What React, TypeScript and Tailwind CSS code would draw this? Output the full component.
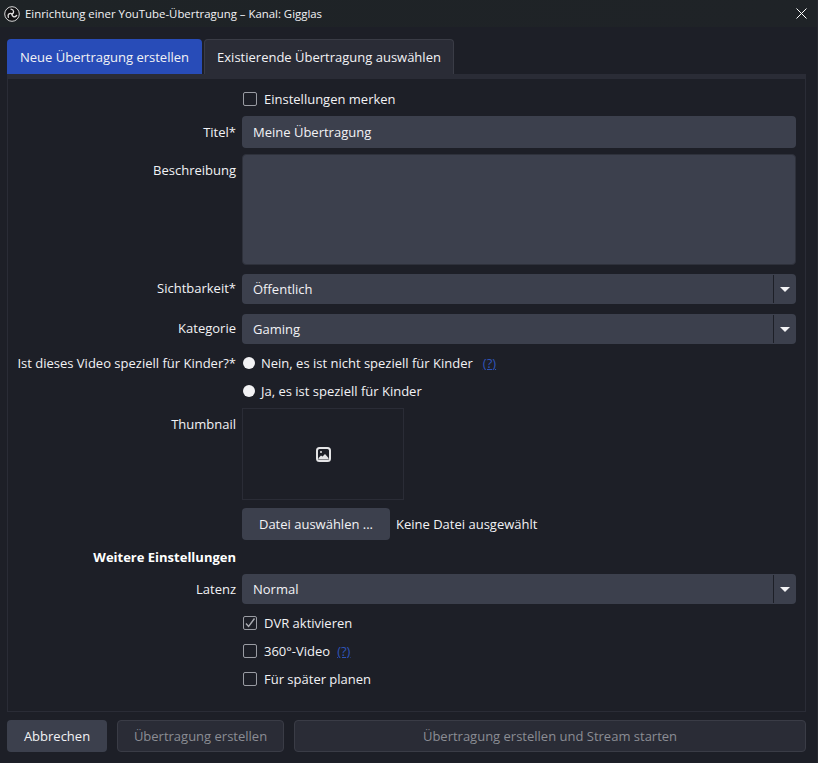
const font = "font-['Open_Sans','Noto_Sans',sans-serif]";

function Row({ label, className, bold, children }: { label?: string; className: string; bold?: boolean; children?: React.ReactNode }) {
  return (
    <div className={"flex " + className}>
      <div className={"w-[228px] shrink-0 text-right whitespace-nowrap " + (bold ? "font-bold text-white" : "")}>{label}</div>
      <div className="ml-[6px] w-[554px]">{children}</div>
    </div>
  );
}

function Box({ checked }: { checked?: boolean }) {
  return (
    <span className="w-[14px] h-[14px] rounded-[2px] border border-[#9a9ca3] flex items-center justify-center shrink-0">
      {checked && (
        <svg width="12" height="12" viewBox="0 0 12 12" fill="none">
          <path d="M2 6.5L4.6 9.5L10.5 1.5" stroke="#a8aab0" strokeWidth="1.4" />
        </svg>
      )}
    </span>
  );
}

function CheckRow({ text, checked, help, className }: { text: string; checked?: boolean; help?: boolean; className: string }) {
  return (
    <Row className={"h-[20px] items-center " + className}>
      <div className="flex items-center h-[20px] pl-[1px]">
        <Box checked={checked} />
        <span className="ml-[7px]">{text}</span>
        {help && <span className="ml-[7px] text-[#2f54b8] underline text-[13px]">(?)</span>}
      </div>
    </Row>
  );
}

function Radio({ text, help }: { text: string; help?: boolean }) {
  return (
    <div className="flex items-center h-[20px] pl-[1px]">
      <span className="w-[12px] h-[12px] rounded-full bg-[#f2f2f4] shrink-0" />
      <span className="ml-[6px]">{text}</span>
      {help && <span className="ml-[10px] text-[#2f54b8] underline text-[13px]">(?)</span>}
    </div>
  );
}

function Select({ value }: { value: string }) {
  return (
    <div className="h-[30px] rounded-[4px] bg-[#3c404d] flex items-center">
      <span className="pl-[11px] flex-1">{value}</span>
      <span className="w-px h-[28px] bg-[#1d1f27]" />
      <span className="w-[22px] flex justify-center">
        <svg width="10" height="5" viewBox="0 0 10 5"><path d="M0 0h10L5 5z" fill="#f4f4f6" /></svg>
      </span>
    </div>
  );
}

export default function App() {
  return (
    <div className={"w-[818px] h-[763px] overflow-hidden bg-[#1d1f27] text-[#f2f2f5] text-[13px] leading-[20px] border-r border-[#26282f] " + font}>
      {/* Title bar */}
      <div className="h-[27px] bg-gradient-to-r from-[#1e2326] to-[#1f2327] flex items-center pl-[4px] pr-[10px] text-[11.4px]">
        <svg width="16" height="16" viewBox="0 0 16 16" className="shrink-0" fill="none">
          <circle cx="8" cy="8" r="7.3" fill="#121214" stroke="#d8d8d8" strokeWidth="1" />
          <g stroke="#e2e2e2" strokeWidth="1.3" strokeLinecap="round">
            <path d="M8 8C10.2 7 10.4 3.8 7 3.2" />
            <path d="M8 8C10.2 7 10.4 3.8 7 3.2" transform="rotate(120 8 8)" />
            <path d="M8 8C10.2 7 10.4 3.8 7 3.2" transform="rotate(240 8 8)" />
          </g>
        </svg>
        <span className="ml-[5px] flex-1">Einrichtung einer YouTube-Übertragung – Kanal: Gigglas</span>
        <svg width="11" height="11" viewBox="0 0 11 11" className="shrink-0" fill="none">
          <path d="M0.5 0.5L10.5 10.5M10.5 0.5L0.5 10.5" stroke="#ffffff" strokeWidth="1" />
        </svg>
      </div>

      {/* Tabs */}
      <div className="flex mt-[12px] pl-[7px] gap-[2px] h-[35px]">
        <div className="w-[195px] rounded-t-[4px] bg-[#284cb8] flex items-center justify-center">Neue Übertragung erstellen</div>
        <div className="w-[250px] rounded-t-[4px] bg-[#2a2c36] border border-b-0 border-[#3a3c46] flex items-center justify-center">Existierende Übertragung auswählen</div>
      </div>

      {/* Pane */}
      <div className="ml-[7px] w-[799px] h-[638px] border-t-[5px] border-t-[#2a2c36] border-x border-b border-x-[#2a2c36] border-b-[#2a2c36]">
        <CheckRow text="Einstellungen merken" className="mt-[10px]" />

        <Row label="Titel*" className="mt-[7px] leading-[32px]">
          <div className="h-[32px] rounded-[4px] bg-[#3c404d] pl-[11px]">Meine Übertragung</div>
        </Row>

        <Row label="Beschreibung" className="mt-[6px] leading-[32px]">
          <div className="h-[111px] rounded-[4px] bg-[#3c404d] border border-[#2e313b]" />
        </Row>

        <Row label="Sichtbarkeit*" className="mt-[9px] leading-[28px]">
          <Select value="Öffentlich" />
        </Row>

        <Row label="Kategorie" className="mt-[10px] leading-[28px]">
          <Select value="Gaming" />
        </Row>

        <Row label="Ist dieses Video speziell für Kinder?*" className="mt-[9px]">
          <Radio text="Nein, es ist nicht speziell für Kinder" help />
          <div className="mt-[8px]">
            <Radio text="Ja, es ist speziell für Kinder" />
          </div>
        </Row>

        <Row label="Thumbnail" className="mt-[7px] leading-[32px]">
          <div className="w-[162px] h-[92px] border border-[#2a2c36] flex items-center justify-center">
            <svg width="15" height="15" viewBox="0 0 15 15">
              <rect x="1" y="1" width="13" height="13" rx="2.5" fill="none" stroke="#e4e4e6" strokeWidth="2" />
              <circle cx="5" cy="5" r="1" fill="#e4e4e6" />
              <path d="M2.5 12.5L2.5 11L5 8.5L6.5 9.5L9 7L12.5 11V12.5z" fill="#e4e4e6" />
            </svg>
          </div>
        </Row>

        <Row className="mt-[8px]">
          <div className="flex items-center">
            <div className="w-[148px] h-[32px] rounded-[4px] bg-[#3c404d] flex items-center justify-center">Datei auswählen ...</div>
            <span className="ml-[6px]">Keine Datei ausgewählt</span>
          </div>
        </Row>

        <Row label="Weitere Einstellungen" bold className="mt-[7px]" />

        <Row label="Latenz" className="mt-[7px] leading-[30px]">
          <Select value="Normal" />
        </Row>

        <CheckRow text="DVR aktivieren" checked className="mt-[9px]" />
        <CheckRow text="360°-Video" help className="mt-[8px]" />
        <CheckRow text="Für später planen" className="mt-[8px]" />
      </div>

      {/* Footer */}
      <div className="flex mt-[8px] pl-[7px] gap-[10px] h-[32px]">
        <div className="w-[100px] rounded-[4px] bg-[#3c404d] flex items-center justify-center">Abbrechen</div>
        <div className="w-[167px] rounded-[4px] bg-[#2a2c36] border border-[#3a3c46] text-[#8b8d94] flex items-center justify-center">Übertragung erstellen</div>
        <div className="w-[512px] rounded-[4px] bg-[#2a2c36] border border-[#3a3c46] text-[#8b8d94] flex items-center justify-center">Übertragung erstellen und Stream starten</div>
      </div>
    </div>
  );
}
